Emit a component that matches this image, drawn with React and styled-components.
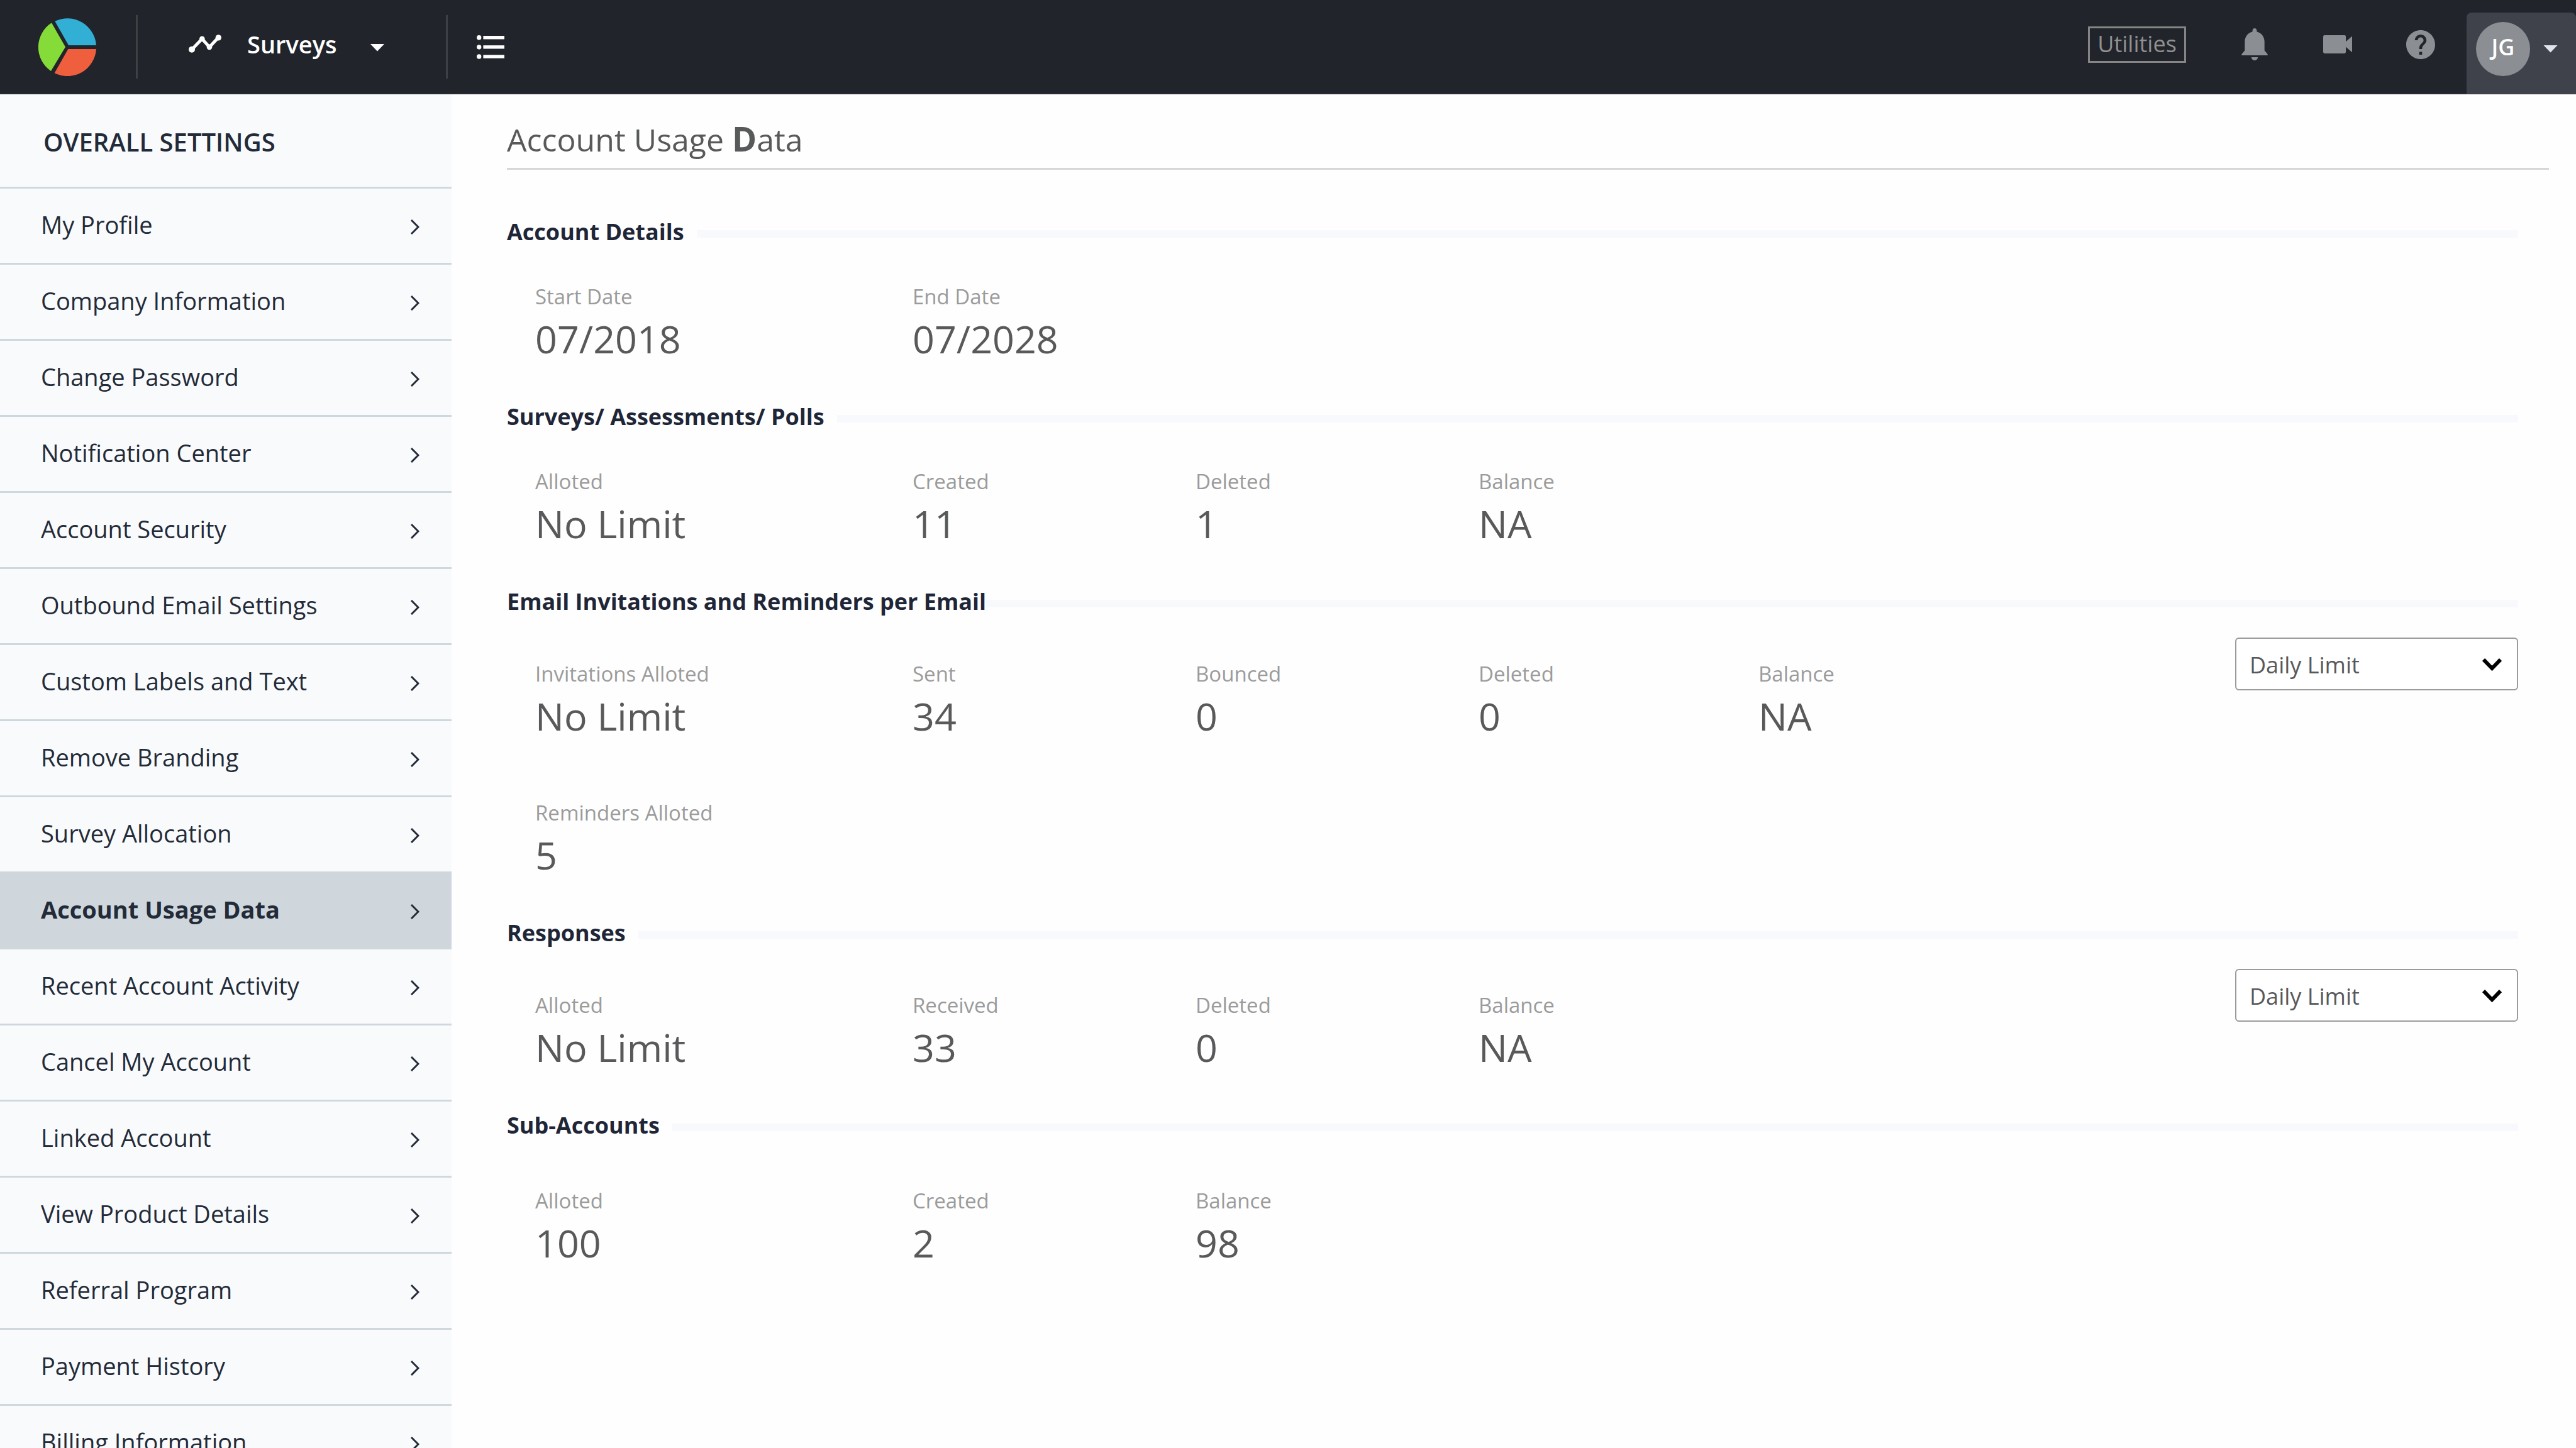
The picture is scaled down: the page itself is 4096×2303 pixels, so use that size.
import React from "react";
import styled, { createGlobalStyle } from "styled-components";

const GlobalStyle = createGlobalStyle`
  *, *::before, *::after { box-sizing: border-box; }
  body {
    margin: 0;
    background: #fefefe;
    font-family: "Open Sans", "Noto Sans", sans-serif;
    color: #58595b;
  }
  button, select { font-family: inherit; }
  button { background: none; border: 0; padding: 0; cursor: pointer; }
`;

const Shell = styled.div`
  display: flex;
  flex-direction: column;
  height: 100vh;
  overflow: hidden;
`;

/* Top bar */

const TopBar = styled.header`
  display: flex;
  flex: none;
  align-items: stretch;
  justify-content: space-between;
  height: 150px;
  background: #21242b;
  border-bottom: 1px solid #3f4247;
`;

const BarGroup = styled.div`
  display: flex;
  align-items: stretch;
`;

const LogoLink = styled.a`
  display: flex;
  align-items: center;
  padding: 0 63px 0 61px;
`;

const Divider = styled.span`
  align-self: center;
  width: 3px;
  height: 101px;
  background: #3e4044;
`;

const ProductButton = styled.button`
  display: flex;
  align-items: center;
  padding: 0 98px 10px 81px;
  color: #fff;
  font-size: 38px;
  font-weight: 600;
`;

const ProductName = styled.span`
  margin: 0 53px 0 41px;
`;

const Caret = styled.span`
  flex: none;
  width: 23px;
  height: 12px;
  background: ${(p) => p.$color};
  clip-path: polygon(0 0, 100% 0, 50% 100%);
`;

const ProductCaret = styled(Caret)`
  margin-top: 12px;
`;

const IconButton = styled.button`
  display: flex;
  align-items: center;
  justify-content: center;
  min-width: 46px;
  color: ${(p) => p.$color || "#8b8e92"};
`;

const ListButton = styled(IconButton)`
  margin-left: 45px;
`;

const Tools = styled.div`
  display: flex;
  align-items: center;
  gap: 86px;
  padding: 0 50px 8px 0;
`;

const UtilitiesButton = styled.button`
  width: 156px;
  height: 58px;
  padding-bottom: 2px;
  border: 3px solid #858585;
  color: #909090;
  font-size: 36px;
  line-height: 46px;
`;

const ProfileButton = styled.button`
  display: flex;
  align-items: center;
  gap: 21px;
  margin-top: 20px;
  padding: 0 29px 14px 15px;
  border-radius: 8px 8px 0 0;
  background: #3f424b;
`;

const Avatar = styled.span`
  display: flex;
  align-items: center;
  justify-content: center;
  width: 86px;
  height: 86px;
  padding-bottom: 6px;
  border-radius: 50%;
  background: #8b8e92;
  color: #fff;
  font-size: 36px;
  font-weight: 600;
`;

/* Sidebar */

const Body = styled.div`
  display: flex;
  flex: 1;
  min-height: 0;
`;

const Sidebar = styled.nav`
  flex: none;
  width: 718px;
  overflow-y: auto;
  scrollbar-width: none;
  background: #f9fafc;
  color: #232b38;
`;

const SidebarTitle = styled.h2`
  display: flex;
  align-items: center;
  height: 150px;
  margin: 0;
  padding: 4px 0 0 69px;
  border-bottom: 3px solid #cfd8dc;
  font-size: 40px;
  font-weight: 600;
`;

const NavList = styled.ul`
  margin: 0;
  padding: 0;
  list-style: none;
`;

const NavLink = styled.a`
  display: flex;
  align-items: center;
  justify-content: space-between;
  height: 121px;
  padding: 4px 51px 0 65px;
  border-bottom: 3px solid #cfd8dc;
  background: ${(p) => (p.$active ? "#cfd7dd" : "transparent")};
  color: inherit;
  font-size: 38px;
  font-weight: ${(p) => (p.$active ? 700 : 400)};
  text-decoration: none;
`;

const NavLabel = styled.span`
  padding-bottom: 8px;
`;

/* Main column */

const Main = styled.main`
  flex: 1;
  min-width: 0;
  padding: 0 43px 0 88px;
`;

const PageTitle = styled.h1`
  margin: 0 0 75px;
  padding: 38px 0 11px;
  border-bottom: 3px solid #d6d8d8;
  font-size: 50px;
  font-weight: 400;
  line-height: 68px;
`;

const TitleInitial = styled.b`
  font-size: 53px;
  line-height: 1;
`;

const Section = styled.section`
  margin: 0 49px 55px 0;
`;

const SectionHeading = styled.h2`
  display: flex;
  align-items: center;
  gap: ${(p) => p.$ruleGap}px;
  margin: 0;
  color: #1f2637;
  font-size: 36px;
  font-weight: 700;
  line-height: 48px;

  &::after {
    content: "";
    flex: 1;
    height: 12px;
    margin-top: 6px;
    background: #f8f9fc;
  }
`;

const SectionBody = styled.div`
  display: flex;
  align-items: flex-start;
  justify-content: space-between;
`;

const StatRows = styled.div`
  display: grid;
  gap: 87px;
  padding: ${(p) => p.$top}px 0 0 45px;
`;

const StatRow = styled.dl`
  display: grid;
  grid-template-columns: 600px 450px 450px 445px auto;
  margin: 0;
`;

const StatLabel = styled.dt`
  color: #9b9b9b;
  font-size: 33px;
  line-height: 44px;
`;

const StatValue = styled.dd`
  margin: 0;
  color: #58595b;
  font-size: 61px;
  line-height: 90px;
`;

const SelectWrap = styled.label`
  position: relative;
  display: block;
  width: 450px;
  margin-top: 33px;
`;

const Select = styled.select`
  appearance: none;
  width: 100%;
  height: 84px;
  padding: 2px 70px 0 21px;
  border: 2px solid #9b9b9b;
  border-radius: 6px;
  background: #fff;
  color: #58595b;
  font-size: 36px;
`;

const SelectArrow = styled.svg`
  position: absolute;
  top: 33px;
  right: 26px;
  pointer-events: none;
`;

const NAV_ITEMS = [
  "My Profile",
  "Company Information",
  "Change Password",
  "Notification Center",
  "Account Security",
  "Outbound Email Settings",
  "Custom Labels and Text",
  "Remove Branding",
  "Survey Allocation",
  "Account Usage Data",
  "Recent Account Activity",
  "Cancel My Account",
  "Linked Account",
  "View Product Details",
  "Referral Program",
  "Payment History",
  "Billing Information",
];

const SECTIONS = [
  {
    title: "Account Details",
    top: 57,
    rows: [[["Start Date", "07/2018"], ["End Date", "07/2028"]]],
  },
  {
    title: "Surveys/ Assessments/ Polls",
    top: 57,
    rows: [[["Alloted", "No Limit"], ["Created", "11"], ["Deleted", "1"], ["Balance", "NA"]]],
  },
  {
    title: "Email Invitations and Reminders per Email",
    top: 69,
    ruleGap: 0,
    limit: true,
    rows: [
      [["Invitations Alloted", "No Limit"], ["Sent", "34"], ["Bounced", "0"], ["Deleted", "0"], ["Balance", "NA"]],
      [["Reminders Alloted", "5"]],
    ],
  },
  {
    title: "Responses",
    top: 69,
    limit: true,
    rows: [[["Alloted", "No Limit"], ["Received", "33"], ["Deleted", "0"], ["Balance", "NA"]]],
  },
  {
    title: "Sub-Accounts",
    top: 74,
    rows: [[["Alloted", "100"], ["Created", "2"], ["Balance", "98"]]],
  },
];

const Logo = () => (
  <svg width="92" height="92" viewBox="0 0 276 276" aria-hidden="true">
    <path d="M63 22 L129 137 L60 252 A138 138 0 0 1 63 22Z" fill="#85dc38" />
    <path d="M79 14 A138 138 0 0 1 276 129 H144Z" fill="#31afd4" />
    <path d="M142 147 H276 A138 138 0 0 1 77 262Z" fill="#ef5f3e" />
  </svg>
);

const TrendIcon = () => (
  <svg width="52" height="29" viewBox="0 0 156 86" fill="currentColor" aria-hidden="true">
    <path d="M15 71 L64 20 L99 59 L142 13" fill="none" stroke="currentColor" strokeWidth="15" />
    <circle cx="15" cy="71" r="15" />
    <circle cx="64" cy="20" r="13" />
    <circle cx="99" cy="59" r="13" />
    <circle cx="142" cy="14" r="14" />
  </svg>
);

const ListIcon = () => (
  <svg width="44" height="38" viewBox="0 0 131 113" fill="currentColor" aria-hidden="true">
    {[11, 56, 101].map((y) => (
      <g key={y}>
        <circle cx="11" cy={y} r="11" />
        <rect x="31" y={y - 8} width="100" height="16" />
      </g>
    ))}
  </svg>
);

const BellIcon = () => (
  <svg width="42" height="51" viewBox="0 0 124 153" fill="currentColor" aria-hidden="true">
    <path d="M62 0C68 0 72 4 72 10V16C94 22 109 40 109 64V106L124 124V129H0V124L15 106V64C15 40 30 22 52 16V10C52 4 56 0 62 0Z" />
    <path d="M46 138H78C76 148 70 153 62 153C54 153 48 148 46 138Z" />
  </svg>
);

const VideoIcon = () => (
  <svg width="46" height="29" viewBox="0 0 139 87" fill="currentColor" aria-hidden="true">
    <rect width="109" height="87" rx="7" />
    <path d="M107 32L139 4V82L107 54Z" />
  </svg>
);

const HelpIcon = () => (
  <svg width="46" height="46" viewBox="2 2 20 20" fill="currentColor" aria-hidden="true">
    <path d="M12 2C6.48 2 2 6.48 2 12s4.48 10 10 10 10-4.48 10-10S17.52 2 12 2zm1 17h-2v-2h2v2zm2.07-7.75l-.9.92C13.45 12.9 13 13.5 13 15h-2v-.5c0-1.1.45-2.1 1.17-2.83l1.24-1.26c.37-.36.59-.86.59-1.41 0-1.1-.9-2-2-2s-2 .9-2 2H8c0-2.21 1.79-4 4-4s4 1.79 4 4c0 .88-.36 1.68-.93 2.25z" />
  </svg>
);

const ChevronRight = () => (
  <svg width="14" height="24" viewBox="0 0 14 24" fill="none" stroke="currentColor" strokeWidth="3" aria-hidden="true">
    <path d="M1 1L12 12L1 23" />
  </svg>
);

const LimitSelect = ({ section }) => (
  <SelectWrap>
    <Select aria-label={`${section} limit`} defaultValue="daily">
      <option value="daily">Daily Limit</option>
    </Select>
    <SelectArrow width="31" height="21" viewBox="0 0 31 21" fill="none" stroke="#000" strokeWidth="6">
      <path d="M2 2L15.500 16L29 2" />
    </SelectArrow>
  </SelectWrap>
);

export default function App() {
  return (
    <>
      <GlobalStyle />
      <Shell>
        <TopBar>
          <BarGroup>
            <LogoLink href="#home" aria-label="Home">
              <Logo />
            </LogoLink>
            <Divider />
            <ProductButton type="button">
              <TrendIcon />
              <ProductName>Surveys</ProductName>
              <ProductCaret $color="#fff" />
            </ProductButton>
            <Divider />
            <ListButton type="button" aria-label="Menu" $color="#fff">
              <ListIcon />
            </ListButton>
          </BarGroup>
          <BarGroup>
            <Tools>
              <UtilitiesButton type="button">Utilities</UtilitiesButton>
              <IconButton type="button" aria-label="Notifications">
                <BellIcon />
              </IconButton>
              <IconButton type="button" aria-label="Videos">
                <VideoIcon />
              </IconButton>
              <IconButton type="button" aria-label="Help">
                <HelpIcon />
              </IconButton>
            </Tools>
            <ProfileButton type="button">
              <Avatar>JG</Avatar>
              <Caret $color="#e0e4ea" />
            </ProfileButton>
          </BarGroup>
        </TopBar>
        <Body>
          <Sidebar>
            <SidebarTitle>OVERALL SETTINGS</SidebarTitle>
            <NavList>
              {NAV_ITEMS.map((item) => (
                <li key={item}>
                  <NavLink href="#settings" $active={item === "Account Usage Data"}>
                    <NavLabel>{item}</NavLabel>
                    <ChevronRight />
                  </NavLink>
                </li>
              ))}
            </NavList>
          </Sidebar>
          <Main>
            <PageTitle>
              Account Usage <TitleInitial>D</TitleInitial>ata
            </PageTitle>
            {SECTIONS.map(({ title, top, ruleGap = 20, limit, rows }) => (
              <Section key={title}>
                <SectionHeading $ruleGap={ruleGap}>{title}</SectionHeading>
                <SectionBody>
                  <StatRows $top={top}>
                    {rows.map((row, i) => (
                      <StatRow key={i}>
                        {row.map(([label, value]) => (
                          <div key={label}>
                            <StatLabel>{label}</StatLabel>
                            <StatValue>{value}</StatValue>
                          </div>
                        ))}
                      </StatRow>
                    ))}
                  </StatRows>
                  {limit && <LimitSelect section={title} />}
                </SectionBody>
              </Section>
            ))}
          </Main>
        </Body>
      </Shell>
    </>
  );
}
